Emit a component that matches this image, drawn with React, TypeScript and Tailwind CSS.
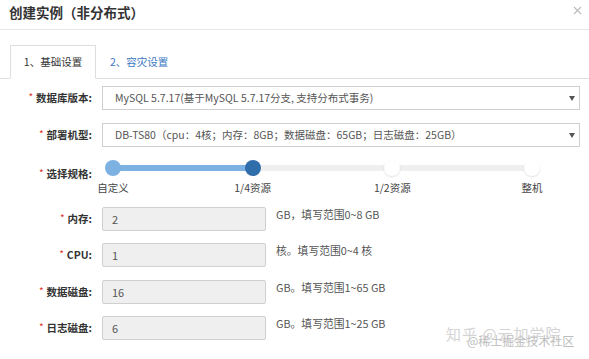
import React from "react";

const FONT = "font-['Noto_Sans_CJK_SC','Noto_Sans',sans-serif]";

function Label({ text, className = "" }: { text: string; className?: string }) {
  return (
    <div className={`w-[92px] shrink-0 flex justify-end items-center text-[10.5px] font-bold text-[#333] leading-[14px] ${className}`}>
      <span className="text-[#e0352b] text-[10px] mr-[3px] -mt-[3px] font-normal">*</span>
      <span>{text}</span>
    </div>
  );
}

function Arrow() {
  return (
    <svg width="6" height="5" viewBox="0 0 6 5" className="shrink-0">
      <path d="M0 0 L6 0 L3 5 Z" fill="#555" />
    </svg>
  );
}

function SelectRow({ label, value, className = "" }: { label: string; value: string; className?: string }) {
  return (
    <div className={`flex items-center ${className}`}>
      <Label text={label} />
      <div className="ml-[10px] w-[478px] h-[24px] border border-[#cfcfcf] bg-white flex items-center justify-between pl-[12px] pr-[4px]">
        <span className="text-[10.5px] text-[#555] whitespace-nowrap leading-[14px]">{value}</span>
        <Arrow />
      </div>
    </div>
  );
}

function InputRow({ label, value, hint, className = "" }: { label: string; value: string; hint: string; className?: string }) {
  return (
    <div className={`flex items-center ${className}`}>
      <Label text={label} />
      <div className="ml-[10px] w-[164px] h-[24px] border border-[#d0d0d0] rounded-[2px] bg-[#efefef] flex items-center pl-[9px]">
        <span className="text-[11px] text-[#555] leading-[14px]">{value}</span>
      </div>
      <span className="self-start ml-[10px] text-[10.8px] text-[#555] leading-[14px] whitespace-nowrap">{hint}</span>
    </div>
  );
}

const stops = [
  { label: "自定义", knob: "bg-[#7cb1e2]" },
  { label: "1/4资源", knob: "bg-[#2f6dab]" },
  { label: "1/2资源", knob: "bg-white shadow-[0_1px_2px_rgba(0,0,0,0.12)]" },
  { label: "整机", knob: "bg-white shadow-[0_1px_2px_rgba(0,0,0,0.12)]" },
];

export default function App() {
  return (
    <div className={`relative w-[589px] h-[359px] bg-white overflow-hidden ${FONT}`}>
      {/* header */}
      <div className="h-[30px] flex items-center justify-between pl-[9px] pr-[7px] border-b border-[#e6e6e6]">
        <span className="text-[13.5px] font-bold text-[#333] leading-[18px] -mt-[5px]">创建实例（非分布式）</span>
        <svg width="9" height="9" viewBox="0 0 9 9" className="-mt-[9px]">
          <path d="M1 1 L8 8 M8 1 L1 8" stroke="#bbb" strokeWidth="1.1" />
        </svg>
      </div>

      {/* tabs */}
      <div className="mt-[15px] h-[34px] flex border-b border-[#dedede] pl-[10px]">
        <div className="w-[86px] h-[34px] border border-[#dedede] border-b-white bg-white flex items-center justify-center text-[10.5px] text-[#333]">
          1、基础设置
        </div>
        <div className="pl-[14px] h-[34px] flex items-center text-[10.5px] text-[#3a78c3]">2、容灾设置</div>
      </div>

      {/* form */}
      <div className="flex flex-col">
        <SelectRow className="mt-[7px]" label="数据库版本:" value="MySQL 5.7.17(基于MySQL 5.7.17分支, 支持分布式事务)" />
        <SelectRow className="mt-[13px]" label="部署机型:" value="DB-TS80（cpu：4核；内存：8GB；数据磁盘：65GB；日志磁盘：25GB）" />

        <div className="flex mt-[13px]">
          <Label text="选择规格:" className="self-start mt-[7px]" />
          <div className="relative ml-[13px] w-[435px]">
            <div className="absolute top-[5px] left-[8px] right-[8px] h-[6px] bg-[#efefef] rounded-full" />
            <div className="absolute top-[5px] left-[8px] w-[140px] h-[6px] bg-[#7cb1e2]" />
            <div className="relative flex justify-between">
              {stops.map((s) => (
                <div key={s.label} className="w-[16px] flex flex-col items-center">
                  <div className={`w-[16px] h-[16px] rounded-full ${s.knob}`} />
                  <span className="mt-[5px] text-[10.5px] text-[#444] leading-[14px] whitespace-nowrap">{s.label}</span>
                </div>
              ))}
            </div>
          </div>
        </div>

        <InputRow className="mt-[12px]" label="内存:" value="2" hint="GB，填写范围0~8 GB" />
        <InputRow className="mt-[12px]" label="CPU:" value="1" hint="核。填写范围0~4 核" />
        <InputRow className="mt-[13px]" label="数据磁盘:" value="16" hint="GB。填写范围1~65 GB" />
        <InputRow className="mt-[12px]" label="日志磁盘:" value="6" hint="GB。填写范围1~25 GB" />
      </div>

      {/* watermark */}
      <div className="absolute left-[446px] top-[325px] text-[15px] leading-[18px] text-[#d4d4d4] whitespace-nowrap tracking-[1px]">
        知乎 @云加学院
      </div>
      <div className="absolute left-[467px] top-[333px] text-[12px] leading-[15px] text-[#bdbdbd] whitespace-nowrap [text-shadow:0_0_1px_#fff]">
        @稀土掘金技术社区
      </div>
    </div>
  );
}
